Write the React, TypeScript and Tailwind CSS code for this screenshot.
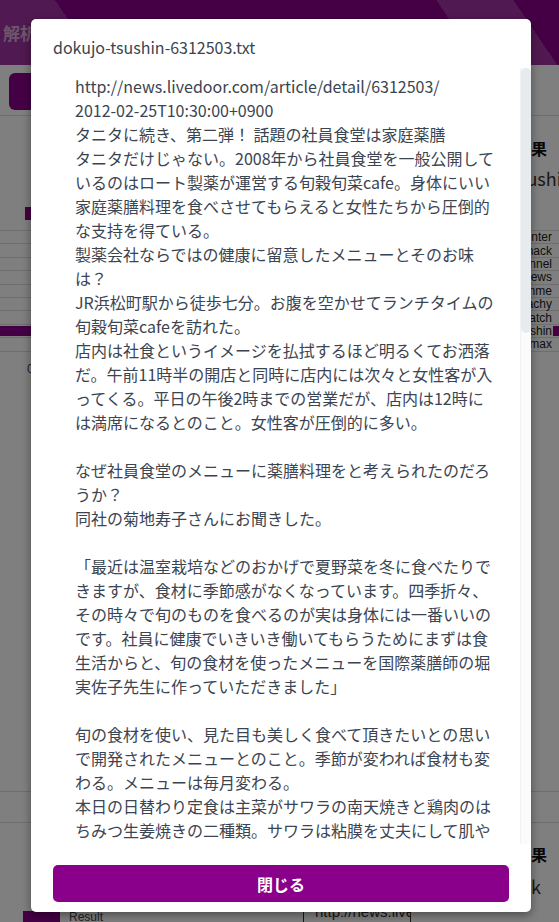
import React from 'react';

const ARTICLE = `http://news.livedoor.com/article/detail/6312503/
2012-02-25T10:30:00+0900
タニタに続き、第二弾！ 話題の社員食堂は家庭薬膳
タニタだけじゃない。2008年から社員食堂を一般公開しているのはロート製薬が運営する旬穀旬菜cafe。身体にいい家庭薬膳料理を食べさせてもらえると女性たちから圧倒的な支持を得ている。
製薬会社ならではの健康に留意したメニューとそのお味は？
JR浜松町駅から徒歩七分。お腹を空かせてランチタイムの旬穀旬菜cafeを訪れた。
店内は社食というイメージを払拭するほど明るくてお洒落だ。午前11時半の開店と同時に店内には次々と女性客が入ってくる。平日の午後2時までの営業だが、店内は12時には満席になるとのこと。女性客が圧倒的に多い。

なぜ社員食堂のメニューに薬膳料理をと考えられたのだろうか？
同社の菊地寿子さんにお聞きした。

「最近は温室栽培などのおかげで夏野菜を冬に食べたりできますが、食材に季節感がなくなっています。四季折々、その時々で旬のものを食べるのが実は身体には一番いいのです。社員に健康でいきいき働いてもらうためにまずは食生活からと、旬の食材を使ったメニューを国際薬膳師の堀実佐子先生に作っていただきました」

旬の食材を使い、見た目も美しく食べて頂きたいとの思いで開発されたメニューとのこと。季節が変われば食材も変わる。メニューは毎月変わる。
本日の日替わり定食は主菜がサワラの南天焼きと鶏肉のはちみつ生姜焼きの二種類。サワラは粘膜を丈夫にして肌や髪を健やかに保ち、鶏肉は身体を温めてくれるという。`;

const LABELS = ['movie-enter', 'it-life-hack', 'kaden-channel', 'topic-news', 'livedoor-homme', 'peachy', 'sports-watch', 'dokujo-tsushin', 'smax'];

function ChartRows({ withLabels }: { withLabels?: boolean }) {
  return (
    <div className="border-t border-[#dcdcdc]">
      {LABELS.map((l) => (
        <div key={l} className="flex h-[13.4px] items-center border-b border-[#dcdcdc]">
          {withLabels && (
            <span className="w-[270px] pr-[1px] text-right text-[12px] leading-none text-[#222] font-['Liberation_Sans',sans-serif]">{l}</span>
          )}
          <div className="flex-1">
            {l === 'dokujo-tsushin' && <div className="h-[10px] w-full bg-[#8b008b]" />}
          </div>
        </div>
      ))}
    </div>
  );
}

export default function App() {
  return (
    <div className="relative h-[922px] w-[559px] overflow-hidden bg-white font-['Noto_Sans_CJK_JP',sans-serif]">
      {/* page behind the dialog */}
      <header className="flex h-[65px] items-center bg-[#8b008b] bg-[image:linear-gradient(56deg,rgba(255,255,255,0.2)_0px,rgba(255,255,255,0.2)_82px,transparent_82px,transparent_398px,rgba(255,255,255,0.2)_398px,rgba(255,255,255,0.2)_462px,transparent_462px)] pl-[3px]">
        <span className="text-[17px] font-bold text-white/60">解析ツール</span>
      </header>
      <div className="flex h-[51px] items-start border-b border-[#dcdcdc] px-[9px] pt-[8px]">
        <button className="h-[37px] w-[130px] rounded-md bg-[#8b008b] text-[14px] font-bold text-white">分析する</button>
      </div>
      <div className="grid h-[676px] grid-cols-[283px_1fr] border-b border-[#dcdcdc]">
        <div className="pt-[91px]">
          <div className="ml-[25px] h-[13px] w-[40px] bg-[#8b008b]" />
          <div className="mt-[10px]">
            <ChartRows />
          </div>
          <div className="mt-[8px] pl-[27px] text-[12px] text-[#444] font-['Liberation_Sans',sans-serif]">0</div>
        </div>
        <div className="pt-[20px]">
          <div className="w-[264px] text-right text-[16px] font-bold leading-[24px] text-[#111]">分類結果</div>
          <div className="mt-[6px] whitespace-nowrap pl-[164px] text-[18px] leading-[24px] text-[#333]">dokujo-tsushin</div>
          <div className="mt-[40px]">
            <ChartRows withLabels />
          </div>
        </div>
      </div>
      <div className="h-[31px] border-b border-[#dcdcdc]" />
      <div className="grid grid-cols-[283px_1fr]">
        <div className="pt-[88px]">
          <div className="flex items-center gap-[9px] pl-[23px]">
            <div className="h-[12px] w-[37px] bg-[#8b008b]" />
            <span className="text-[12px] leading-[12px] text-[#444] font-['Liberation_Sans',sans-serif]">Result</span>
          </div>
        </div>
        <div className="pt-[19px]">
          <div className="w-[264px] text-right text-[16px] font-bold leading-[24px] text-[#111]">分類結果</div>
          <div className="mt-[8px] w-[258px] text-right text-[18px] leading-[24px] text-[#333]">it-life-hack</div>
          <div className="ml-[20px] mt-[2px] w-[108px] overflow-hidden whitespace-nowrap border border-[#333] px-[11px] text-[15px] leading-[22px] text-[#333] font-['Liberation_Sans',sans-serif]">http://news.livedoor.com</div>
        </div>
      </div>

      {/* dialog */}
      <div className="absolute inset-0 bg-black/50">
        <div className="absolute left-[31px] top-[19px] flex h-[893px] w-[500px] flex-col rounded-[5px] bg-white shadow-[0_3px_10px_rgba(0,0,0,0.4)]">
          <h2 className="px-[22px] pt-[16px] text-[16px] leading-[24px] text-[#3b4451]">dokujo-tsushin-6312503.txt</h2>
          <div className="ml-[22px] mt-[9px] flex h-[776px]">
            <div className="flex-1 overflow-hidden">
              <div className="whitespace-pre-wrap py-[6px] pl-[22px] pr-[21px] text-[16px] leading-[24px] text-[#3b4451]">
                {ARTICLE}
              </div>
            </div>
            <div className="w-[11px] border-l border-[#f2f2f2] bg-[#fbfbfb]">
              <div className="h-[265px] rounded-full bg-[#e8ebed]" />
            </div>
          </div>
          <button className="mx-[22px] mt-[21px] h-[37px] rounded-[5px] bg-[#8b008b] text-[16px] font-bold text-white">閉じる</button>
        </div>
      </div>
    </div>
  );
}
